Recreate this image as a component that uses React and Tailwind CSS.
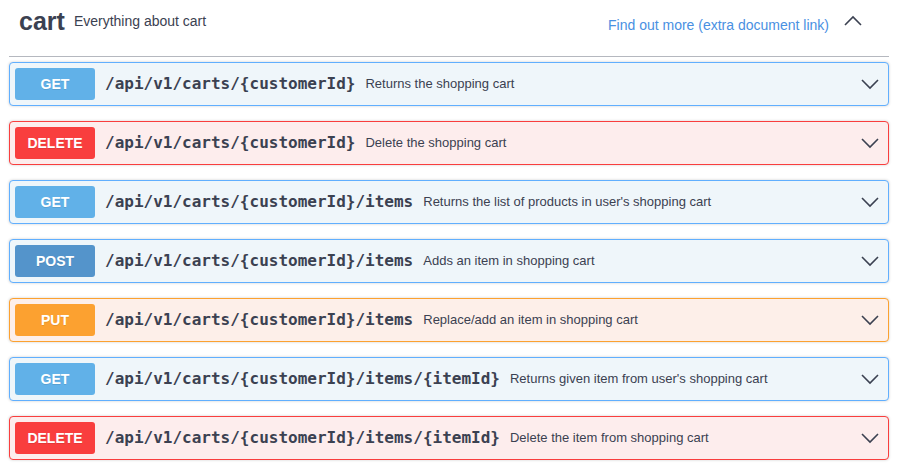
import React from "react";

const rows = [
  { m: "GET", path: "/api/v1/carts/{customerId}", desc: "Returns the shopping cart", t: "get" },
  { m: "DELETE", path: "/api/v1/carts/{customerId}", desc: "Delete the shopping cart", t: "del" },
  { m: "GET", path: "/api/v1/carts/{customerId}/items", desc: "Returns the list of products in user's shopping cart", t: "get" },
  { m: "POST", path: "/api/v1/carts/{customerId}/items", desc: "Adds an item in shopping cart", t: "post" },
  { m: "PUT", path: "/api/v1/carts/{customerId}/items", desc: "Replace/add an item in shopping cart", t: "put" },
  { m: "GET", path: "/api/v1/carts/{customerId}/items/{itemId}", desc: "Returns given item from user's shopping cart", t: "get" },
  { m: "DELETE", path: "/api/v1/carts/{customerId}/items/{itemId}", desc: "Delete the item from shopping cart", t: "del" },
];

const rowCls = {
  get: "border-[#61affe] bg-[#eff6fa]",
  post: "border-[#61affe] bg-[#eff6fa]",
  del: "border-[#f93e3e] bg-[#fdeded]",
  put: "border-[#fca130] bg-[#fdefe9]",
};
const badgeCls = {
  get: "bg-[#61b1e8]",
  post: "bg-[#5fa6e0] bg-[radial-gradient(circle,rgba(30,60,100,0.55)_0.5px,transparent_0.8px)] bg-[length:2px_2px]",
  del: "bg-[#f93e3e]",
  put: "bg-[#fca130]",
};

function Chevron({ up }) {
  return (
    <svg width="20" height="20" viewBox="0 0 20 20" className="shrink-0">
      <path
        d={up ? "M2 14 L10 6 L18 14" : "M2 6 L10 14 L18 6"}
        fill="none"
        stroke="#3b4151"
        strokeWidth="1.6"
      />
    </svg>
  );
}

export default function App() {
  return (
    <div className="w-[898px] h-[475px] bg-white px-[9px] font-['Liberation_Sans',Arial,sans-serif] text-[#3b4151] overflow-hidden">
      <div className="h-[57px] flex items-center border-b border-[#b5b8bf] pl-[10px] pr-[26px]">
        <span className="text-[25px] font-bold leading-none -mt-[14px]">cart</span>
        <span className="text-[14px] ml-[9px] -mt-[14px]">Everything about cart</span>
        <span className="ml-auto text-[14px] text-[#4990e2] -mt-[6px]">Find out more (extra document link)</span>
        <span className="ml-[14px] -mt-[14px]">
          <Chevron up />
        </span>
      </div>
      <div className="flex flex-col gap-[15px] mt-[5px]">
        {rows.map((r, i) => (
          <div
            key={i}
            className={`h-[44px] border rounded-[4px] flex items-center px-[5px] shadow-[0_0_3px_rgba(0,0,0,0.19)] ${rowCls[r.t]}`}
          >
            <div
              className={`w-[80px] h-[32px] rounded-[3px] flex items-center justify-center text-white text-[14px] font-bold [text-shadow:0_1px_0_rgba(0,0,0,0.1)] ${badgeCls[r.t]}`}
            >
              {r.m}
            </div>
            <span className="ml-[10px] font-['DejaVu_Sans_Mono',monospace] font-bold text-[16px] text-[#3b4151]">
              {r.path}
            </span>
            <span className="ml-[10px] text-[13px] text-[#3b4151]">{r.desc}</span>
            <span className="ml-auto mr-[3px]">
              <Chevron />
            </span>
          </div>
        ))}
      </div>
    </div>
  );
}
